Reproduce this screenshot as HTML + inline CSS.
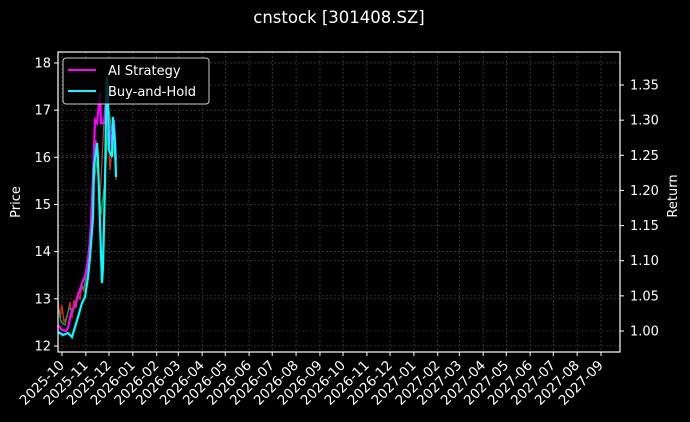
<!DOCTYPE html>
<html><head><meta charset="utf-8"><style>
html,body{margin:0;padding:0;background:#000;}
svg{display:block;font-family:"DejaVu Sans","Liberation Sans",sans-serif;}
</style></head><body>
<svg id="s" width="690" height="422" viewBox="0 0 690 422" xmlns="http://www.w3.org/2000/svg">
<rect width="690" height="422" fill="#000"/>
<text x="339" y="23" fill="#fff" font-size="16.5" text-anchor="middle">cnstock [301408.SZ]</text>
<g id="grid"></g>
<polyline fill="none" stroke="#d03020" stroke-width="1.3" points="58,300 60,318 62,305 64,322 66,318 68,312 70,302 72,318 74,300 76,308 78,292 80,300 82,285 84,292 86,270 88,260 90,240 92,200 94,150 96,140 98,175 100,200 102,160 104,120 106,95 108,130 110,170 112,150 114,130 116,180"/>
<polyline fill="none" stroke="#20a040" stroke-width="1.3" points="59,310 61,322 65,325 69,308 73,312 77,296 81,290 85,285 89,255 93,190 97,160 101,215 105,180 109,110 113,140 116,170"/>
<polyline fill="none" stroke="#ff00ff" stroke-width="2.2" points="58,325 62,330 66,331 68,328 70,318 72,310 75,306 78,296 82,283 85,276 88,260 90,240 92,200 94,150 95,120 97,123 100,93 101,123 104,123 106,100 107,88 109,123 112,150 114,120 116,160"/>
<polyline fill="none" stroke="#00ffff" stroke-width="2.2" points="58,332 63,335 68,333 72,337 75,327 78,317 82,303 85,297 88,277 90,257 93,217 94,167 97,143 98,160 100,223 102,283 103,267 105,183 106,117 107,77 108,100 109,150 112,157 113,117 115,143 116,177"/>
<rect x="58" y="52" width="562" height="300" fill="none" stroke="#fff" stroke-width="1.2"/>
<g id="ax"></g>
<text x="20" y="202" fill="#fff" font-size="13" text-anchor="middle" transform="rotate(-90 20 202)">Price</text>
<text x="677" y="196" fill="#fff" font-size="13" text-anchor="middle" transform="rotate(-90 677 196)">Return</text>
<rect x="63" y="58" width="146" height="46" rx="3" fill="#000" fill-opacity="0.8" stroke="#ccc" stroke-width="1"/>
<line x1="68" y1="70" x2="96" y2="70" stroke="#ff00ff" stroke-width="2"/>
<text x="108" y="75" fill="#fff" font-size="13">AI Strategy</text>
<line x1="68" y1="91" x2="96" y2="91" stroke="#00ffff" stroke-width="2"/>
<text x="108" y="96" fill="#fff" font-size="13">Buy-and-Hold</text>
</svg>
<script>
var NS="http://www.w3.org/2000/svg";
function el(p,t,a,txt){var e=document.createElementNS(NS,t);for(var k in a)e.setAttribute(k,a[k]);if(txt)e.textContent=txt;document.getElementById(p).appendChild(e);}
var days=[0,31,30,31,31,28,31,30,31,30,31,31,30,31,30,31,31,28,31,30,31,30,31,31];
var labels=[];var y=2025,m=10;
for(var i=0;i<24;i++){labels.push(y+"-"+(m<10?"0":"")+m);m++;if(m>12){m=1;y++;}}
var x0=62,ppd=(601-62)/700,cum=0;
for(var i=0;i<24;i++){cum+=days[i];var x=x0+cum*ppd;
el("grid","line",{x1:x,y1:52,x2:x,y2:352,stroke:"#555","stroke-width":0.6,"stroke-dasharray":"2,2"});
el("ax","line",{x1:x,y1:352,x2:x,y2:356,stroke:"#fff","stroke-width":1});
var tx=x+3,ty=366;
el("ax","text",{x:tx,y:ty,fill:"#fff","font-size":"13.5","text-anchor":"end",transform:"rotate(-45 "+tx+" "+ty+")"},labels[i]);}
for(var v=12;v<=18;v++){var yy=346-(v-12)*47.17;
el("grid","line",{x1:58,y1:yy,x2:620,y2:yy,stroke:"#555","stroke-width":0.6,"stroke-dasharray":"2,2"});
el("ax","line",{x1:54,y1:yy,x2:58,y2:yy,stroke:"#fff","stroke-width":1});
el("ax","text",{x:51,y:yy+4.5,fill:"#fff","font-size":"13","text-anchor":"end"},String(v));}
for(var j=0;j<8;j++){var r=1+j*0.05,yy=331-j*35.14;
el("grid","line",{x1:58,y1:yy,x2:620,y2:yy,stroke:"#444","stroke-width":0.6,"stroke-dasharray":"2,2"});
el("ax","line",{x1:620,y1:yy,x2:624,y2:yy,stroke:"#fff","stroke-width":1});
el("ax","text",{x:630,y:yy+4.5,fill:"#fff","font-size":"13"},r.toFixed(2));}
</script>
</body></html>
